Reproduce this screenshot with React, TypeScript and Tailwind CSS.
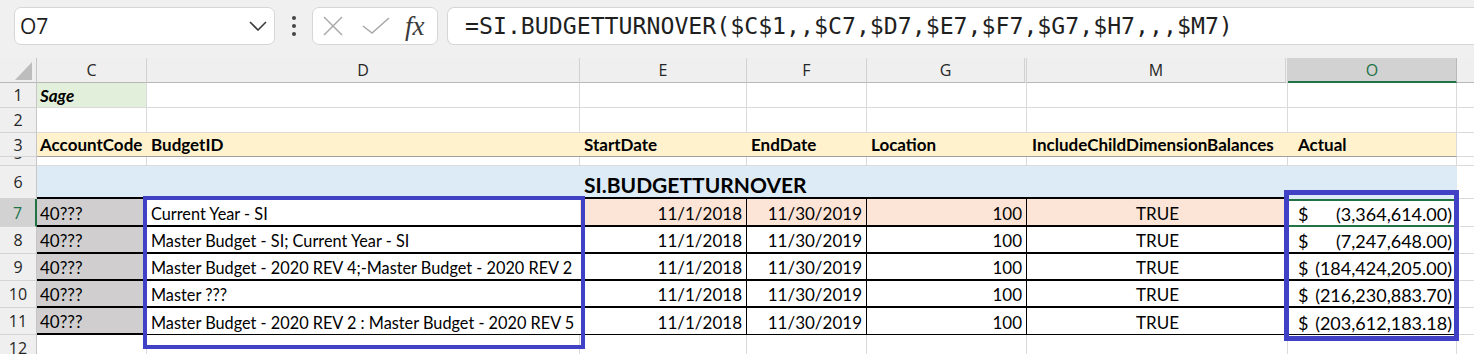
import React from "react";

const cols = "grid grid-cols-[37px_110px_433px_167px_120px_160px_261px_169px_17px]";

function RH({ children, sel = false, extra = "" }: { children?: React.ReactNode; sel?: boolean; extra?: string }) {
  return (
    <div
      className={`flex items-center justify-center overflow-hidden font-['Open_Sans',sans-serif] text-[16px] leading-none border-b border-b-[#d4d4d4] ${
        sel ? "bg-[#d2d2d2] text-[#217346] border-r-2 border-r-[#217346]" : "bg-[#efefef] text-[#262626] border-r border-r-[#c6c6c6]"
      } ${extra}`}
    >
      {children}
    </div>
  );
}

function Blank() {
  return <div className="border-r border-b border-[#dadada]" />;
}

function Tail() {
  return <div className="border-b border-[#dadada]" />;
}

type DR = {
  n: number;
  d: string;
  amt: string;
  h: string;
  active?: boolean;
  last?: boolean;
};

const rows: DR[] = [
  { n: 7, d: "Current Year - SI", amt: "(3,364,614.00)", h: "h-[28px]", active: true },
  { n: 8, d: "Master Budget - SI; Current Year - SI", amt: "(7,247,648.00)", h: "h-[27px]" },
  { n: 9, d: "Master Budget - 2020 REV 4;-Master Budget - 2020 REV 2", amt: "(184,424,205.00)", h: "h-[27px]" },
  { n: 10, d: "Master ???", amt: "(216,230,883.70)", h: "h-[27px]" },
  { n: 11, d: "Master Budget - 2020 REV 2 : Master Budget - 2020 REV 5", amt: "(203,612,183.18)", h: "h-[27px]", last: true },
];

function DataRow({ r }: { r: DR }) {
  const peach = r.active ? "bg-[#fce4d6]" : "bg-white";
  const bb = r.last ? "border-b border-b-black" : "border-b-2 border-b-black";
  return (
    <div className={`${cols} ${r.h}`}>
      <RH sel={r.active}>{r.n}</RH>
      <div className="bg-[#d0cece] border-r border-r-[#dadada] border-b-2 border-b-black flex items-end pl-[3px] pb-[1px] leading-[20px] whitespace-nowrap overflow-hidden">
        40???
      </div>
      <div className={`bg-white ${bb} flex items-end pl-[4px] pb-[1px] text-[16.3px] leading-[20px] whitespace-nowrap overflow-hidden`}>{r.d}</div>
      <div className={`${peach} border-r border-r-black ${bb} flex items-end justify-end pr-[4px] pb-[1px] leading-[20px]`}>11/1/2018</div>
      <div className={`${peach} border-r border-r-black ${bb} flex items-end justify-end pr-[4px] pb-[1px] leading-[20px]`}>11/30/2019</div>
      <div className={`${peach} border-r border-r-black ${bb} flex items-end justify-end pr-[4px] pb-[1px] leading-[20px]`}>100</div>
      <div className={`${peach} ${bb} flex items-end justify-center pb-[1px] leading-[20px]`}>TRUE</div>
      <div
        className={`relative bg-white ${
          r.active ? "border-b-2 border-b-[#217346]" : bb
        } flex items-end justify-between pl-[10px] pr-[5px] pb-[1px] text-[18px] leading-[20px] whitespace-nowrap`}
      >
        {r.active && <div className="absolute left-0 right-0 top-0 h-[2px] bg-[#217346]" />}
        {r.active && <div className="absolute right-[-3px] bottom-[-3px] w-[6px] h-[6px] bg-[#217346] border border-white" />}
        <span>$</span>
        <span>{r.amt}</span>
      </div>
      <Tail />
    </div>
  );
}

function FormulaBar() {
  return (
    <div className="h-[58px] bg-[#f0f0f0] flex items-start pt-[7px]">
      <div className="ml-[14px] w-[261px] h-[38px] bg-white border border-[#d6d6d6] rounded-[7px] flex items-center justify-between pl-[5px] pr-[7px]">
        <span className="font-['Open_Sans',sans-serif] text-[21px] text-[#1f1f1f] leading-none">O7</span>
        <svg width="18" height="10" viewBox="0 0 18 10" className="text-[#3a3a3a]">
          <polyline points="1,1 9,9 17,1" fill="none" stroke="currentColor" strokeWidth="1.6" />
        </svg>
      </div>
      <div className="w-[37px] h-[38px] flex flex-col items-center justify-center gap-[4px]">
        <div className="w-[4px] h-[4px] rounded-full bg-[#444]" />
        <div className="w-[4px] h-[4px] rounded-full bg-[#444]" />
        <div className="w-[4px] h-[4px] rounded-full bg-[#444]" />
      </div>
      <div className="w-[126px] h-[38px] bg-white border border-[#d6d6d6] rounded-[7px] flex items-center pl-[9px]">
        <svg width="22" height="20" viewBox="0 0 22 20">
          <line x1="2" y1="1" x2="20" y2="19" stroke="#a8a8a8" strokeWidth="1.5" />
          <line x1="20" y1="1" x2="2" y2="19" stroke="#a8a8a8" strokeWidth="1.5" />
        </svg>
        <svg width="28" height="18" viewBox="0 0 28 18" className="ml-[18px]">
          <polyline points="1,9 10,16 27,1" fill="none" stroke="#a8a8a8" strokeWidth="1.5" />
        </svg>
        <span className="ml-[15px] font-['Liberation_Serif',serif] italic text-[27px] text-[#3a3a3a] leading-none">fx</span>
      </div>
      <div className="ml-[9px] flex-1 h-[38px] bg-white border-y border-l border-[#d6d6d6] rounded-l-[7px] flex items-center pl-[17px]">
        <span className="font-['DejaVu_Sans_Mono',monospace] text-[23.2px] text-[#1f1f1f] leading-none whitespace-nowrap">
          =SI.BUDGETTURNOVER($C$1,,$C7,$D7,$E7,$F7,$G7,$H7,,,$M7)
        </span>
      </div>
    </div>
  );
}

function ColHead({ l, extra = "" }: { l: string; extra?: string }) {
  return (
    <div
      className={`flex items-center justify-center bg-[#efefef] border-r border-r-[#d2d2d2] border-b border-b-[#b8b8b8] font-['Open_Sans',sans-serif] text-[16px] text-[#262626] leading-none ${extra}`}
    >
      {l}
    </div>
  );
}

export default function App() {
  return (
    <div className="relative w-[1474px] h-[354px] overflow-hidden bg-white font-['Lato',sans-serif] text-[17px] text-black">
      <FormulaBar />

      {/* column headers */}
      <div className={`${cols} h-[25px]`}>
        <div className="relative bg-[#efefef] border-r border-r-[#c6c6c6] border-b border-b-[#b8b8b8]">
          <svg width="36" height="24" viewBox="0 0 36 24" className="absolute left-0 top-0">
            <polygon points="15,22 32,22 32,4" fill="#bdbdbd" />
          </svg>
        </div>
        <ColHead l="C" />
        <ColHead l="D" />
        <ColHead l="E" />
        <ColHead l="F" />
        <ColHead l="G" extra="border-r-[3px] border-double" />
        <ColHead l="M" extra="border-r-[3px] border-double" />
        <div className="flex items-center justify-center bg-[#d2d2d2] border-r border-r-[#b8b8b8] border-b-2 border-b-[#217346] font-['Open_Sans',sans-serif] text-[16px] text-[#217346] leading-none">
          O
        </div>
        <div className="bg-[#efefef] border-b border-b-[#b8b8b8]" />
      </div>

      {/* row 1 */}
      <div className={`${cols} h-[25px]`}>
        <RH>1</RH>
        <div className="bg-[#e2efda] border-r border-b border-[#dadada] flex items-end pl-[3px] pb-[1px] font-bold italic leading-[20px]">
          Sage
        </div>
        <Blank />
        <Blank />
        <Blank />
        <Blank />
        <Blank />
        <Blank />
        <Tail />
      </div>

      {/* row 2 */}
      <div className={`${cols} h-[25px]`}>
        <RH>2</RH>
        <Blank />
        <Blank />
        <Blank />
        <Blank />
        <Blank />
        <Blank />
        <Blank />
        <Tail />
      </div>

      {/* row 3 */}
      <div className={`${cols} h-[24px]`}>
        <RH extra="border-b-[#a0a0a0]">3</RH>
        <div className="bg-[#fff2cc] border-b border-b-[#a0a0a0] flex items-end pl-[3px] pb-[1px] font-bold leading-[20px]">AccountCode</div>
        <div className="bg-[#fff2cc] border-b border-b-[#a0a0a0] flex items-end pl-[4px] pb-[1px] font-bold leading-[20px]">BudgetID</div>
        <div className="bg-[#fff2cc] border-b border-b-[#a0a0a0] flex items-end pl-[4px] pb-[1px] font-bold leading-[20px]">StartDate</div>
        <div className="bg-[#fff2cc] border-b border-b-[#a0a0a0] flex items-end pl-[4px] pb-[1px] font-bold leading-[20px]">EndDate</div>
        <div className="bg-[#fff2cc] border-b border-b-[#a0a0a0] flex items-end pl-[4px] pb-[1px] font-bold leading-[20px]">Location</div>
        <div className="bg-[#fff2cc] border-b border-b-[#a0a0a0] flex items-end pl-[5px] pb-[1px] font-bold leading-[20px] whitespace-nowrap">
          IncludeChildDimensionBalances
        </div>
        <div className="bg-[#fff2cc] border-r border-r-[#dadada] border-b border-b-[#a0a0a0] flex items-end pl-[10px] pb-[1px] font-bold leading-[20px]">
          Actual
        </div>
        <Tail />
      </div>

      {/* row 5 (squeezed) */}
      <div className={`${cols} h-[9px]`}>
        <div className="overflow-hidden bg-[#efefef] border-r border-r-[#c6c6c6] border-b border-b-[#d4d4d4] flex justify-center">
          <span className="-mt-[14px] font-['Open_Sans',sans-serif] text-[16px] leading-[20px] text-[#262626]">5</span>
        </div>
        <Blank />
        <Blank />
        <Blank />
        <Blank />
        <Blank />
        <Blank />
        <Blank />
        <Tail />
      </div>

      {/* row 6 */}
      <div className={`${cols} h-[33px]`}>
        <RH>6</RH>
        <div className="bg-[#ddebf7] border-b-2 border-b-black" />
        <div className="bg-[#ddebf7] border-b-2 border-b-black" />
        <div className="relative bg-[#ddebf7] border-b-2 border-b-black flex items-end pl-[4px] pb-0 overflow-visible">
          <span className="relative z-10 font-bold text-[21px] leading-[24px] whitespace-nowrap">SI.BUDGETTURNOVER</span>
        </div>
        <div className="bg-[#ddebf7] border-b-2 border-b-black" />
        <div className="bg-[#ddebf7] border-b-2 border-b-black" />
        <div className="bg-[#ddebf7] border-b-2 border-b-black" />
        <div className="bg-[#ddebf7]" />
        <Tail />
      </div>

      {rows.map((r) => (
        <DataRow key={r.n} r={r} />
      ))}

      {/* row 12 */}
      <div className={`${cols} h-[27px]`}>
        <RH>12</RH>
        <Blank />
        <Blank />
        <Blank />
        <Blank />
        <Blank />
        <Blank />
        <Blank />
        <Tail />
      </div>

      {/* highlight boxes */}
      <div className="absolute left-[143px] top-[196px] w-[442px] h-[153px] border-4 border-[#4141c6] pointer-events-none" />
      <div className="absolute left-[1284px] top-[190px] w-[175px] h-[151px] border-[5px] border-[#4141c6] pointer-events-none" />
    </div>
  );
}
